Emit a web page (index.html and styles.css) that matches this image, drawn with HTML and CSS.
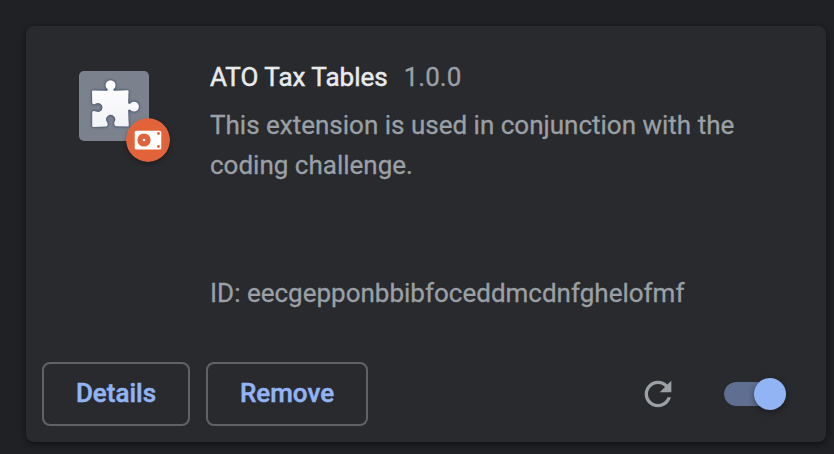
FILE: index.html
```html
<!DOCTYPE html>
<html lang="en">
<head>
<meta charset="utf-8">
<title>Extensions</title>
<link rel="stylesheet" href="styles.css">
</head>
<body>
<article class="card">
  <div class="main">
    <div class="icon">
      <svg class="tile" viewBox="0 0 70 70">
        <defs>
          <linearGradient id="piece" x1="0" y1="0" x2="0" y2="1"><stop offset="0" stop-color="#fff"/><stop offset="1" stop-color="#f1f2f6"/></linearGradient>
        </defs>
        <rect width="70" height="70" rx="5" fill="#7b828e"/>
        <path class="piece" fill="url(#piece)" d="M14 19.500 L26.500 19.800 C29 19.800 29.500 19.300 28.300 18 A5 5 0 1 1 34.800 18 C33.800 19.300 34.200 19.800 36.500 19.800 L48.500 19.300 Q49.700 19.300 49.600 20.500 L49.200 30.500 C49.200 33 50 33.500 51.600 32.200 A4.900 4.900 0 1 1 51.600 39.200 C50 38 49.200 38.500 49.200 40.500 L49.800 54.500 Q49.800 55.500 48.600 55.500 L37.500 55.200 C35.300 55 34.800 53 35.500 50.800 A4.500 4.500 0 1 0 27.800 50.800 C29.300 53 28.800 55.200 27 55.500 L14.500 56 Q13.200 56 13.200 54.500 L13.200 41.500 C13.400 39.700 15 39.400 17 40.600 A4.500 4.500 0 1 0 17 32.500 C15 33.700 13.200 33.200 13.200 31.500 L13 20.700 Q13 19.500 14 19.500 Z"/>
      </svg>
      <svg class="badge" viewBox="0 0 44 44">
        <circle cx="22" cy="22" r="22" fill="#e2633a"/>
        <rect x="8.700" y="12.700" width="26.600" height="18.800" rx="1.500" fill="#fff"/>
        <circle cx="18" cy="22" r="6.600" fill="#e2633a"/>
        <circle cx="18" cy="22" r="1.300" fill="#fff"/>
        <circle cx="32.500" cy="15.500" r="1.400" fill="#e2633a"/>
        <circle cx="32.500" cy="28.500" r="1.400" fill="#e2633a"/>
      </svg>
    </div>
    <div class="content">
      <div class="heading"><h1 class="name">ATO Tax Tables</h1><span class="version">1.0.0</span></div>
      <p class="description">This extension is used in conjunction with the coding challenge.</p>
      <p class="extension-id">ID: eecgepponbbibfoceddmcdnfghelofmf</p>
    </div>
  </div>
  <footer class="actions">
    <button class="button details">Details</button>
    <button class="button remove">Remove</button>
    <svg class="reload" viewBox="0 0 24 24"><path d="M17.650 6.350C16.200 4.900 14.210 4 12 4c-4.420 0-7.990 3.580-7.990 8s3.570 8 7.990 8c3.730 0 6.840-2.550 7.730-6h-2.080c-.82 2.330-3.040 4-5.650 4-3.310 0-6-2.690-6-6s2.690-6 6-6c1.660 0 3.140.69 4.220 1.780L13 11h7V4l-2.350 2.350z"/></svg>
    <div class="toggle"><span class="knob"></span></div>
  </footer>
</article>
</body>
</html>
```
FILE: styles.css
```css
* { box-sizing: border-box; }

body {
  margin: 0;
  height: 454px;
  padding: 26px 8px 12px 26px;
  overflow: hidden;
  background: #202124;
  color: #9aa0a6;
  font: 26px/40px Roboto, "Liberation Sans", sans-serif;
  -webkit-text-stroke: .3px;
}

.card {
  display: flex;
  flex-direction: column;
  height: 416px;
  border-radius: 8px;
  background: #292a2d;
  box-shadow: 0 2px 4px rgba(0, 0, 0, .3), 0 2px 6px 2px rgba(0, 0, 0, .15);
}

.main {
  display: flex;
  flex: 1;
  padding: 31px 53px 0;
}

.icon {
  position: relative;
  width: 70px;
  height: 70px;
  margin: 14px 61px 0 0;
}

.tile {
  display: block;
  width: 70px;
  height: 70px;
}

.piece {
  filter: drop-shadow(0 0 1px #46506a) drop-shadow(0 .5px 1px rgba(70, 80, 106, .8));
}

.badge {
  position: absolute;
  top: 47px;
  left: 47px;
  width: 44px;
  height: 44px;
  border-radius: 50%;
  box-shadow: 0 2px 4px rgba(0, 0, 0, .3);
}

.content { flex: 1; }

.heading {
  display: flex;
  gap: 16px;
  height: 48px;
}

.name {
  margin: 0;
  color: #e8eaed;
  font: inherit;
  -webkit-text-stroke: .5px;
}

.description,
.extension-id { margin: 0; }

.description {
  width: 560px;
  height: 168px;
}

.extension-id { white-space: nowrap; }

.actions {
  display: flex;
  align-items: center;
  height: 96px;
  padding: 0 40px 0 16px;
}

.button {
  height: 64px;
  margin: 0 16px 0 0;
  padding: 0 0 2px;
  border: 2px solid #5f6368;
  border-radius: 8px;
  background: none;
  color: #92b4f4;
  font: 500 26px/40px Roboto, "Liberation Sans", sans-serif;
  -webkit-text-stroke: .5px;
}

.details { width: 148px; }
.remove { width: 162px; }

.reload {
  width: 40px;
  height: 40px;
  margin-left: auto;
  fill: #9aa0a6;
}

.toggle {
  display: flex;
  align-items: center;
  justify-content: flex-end;
  width: 62px;
  height: 24px;
  margin-left: 46px;
  border-radius: 12px;
  background: linear-gradient(#5f6f91, #5f6f91) no-repeat 12px 0 / 36px 24px,
    radial-gradient(circle at 12px 12px, #5f6f91 11.5px, transparent 12.500px);
}

.knob {
  width: 32px;
  height: 32px;
  flex: none;
  border-radius: 50%;
  background: #92b4f4;
  box-shadow: 0 2px 6px rgba(0, 0, 0, .4);
}
```
